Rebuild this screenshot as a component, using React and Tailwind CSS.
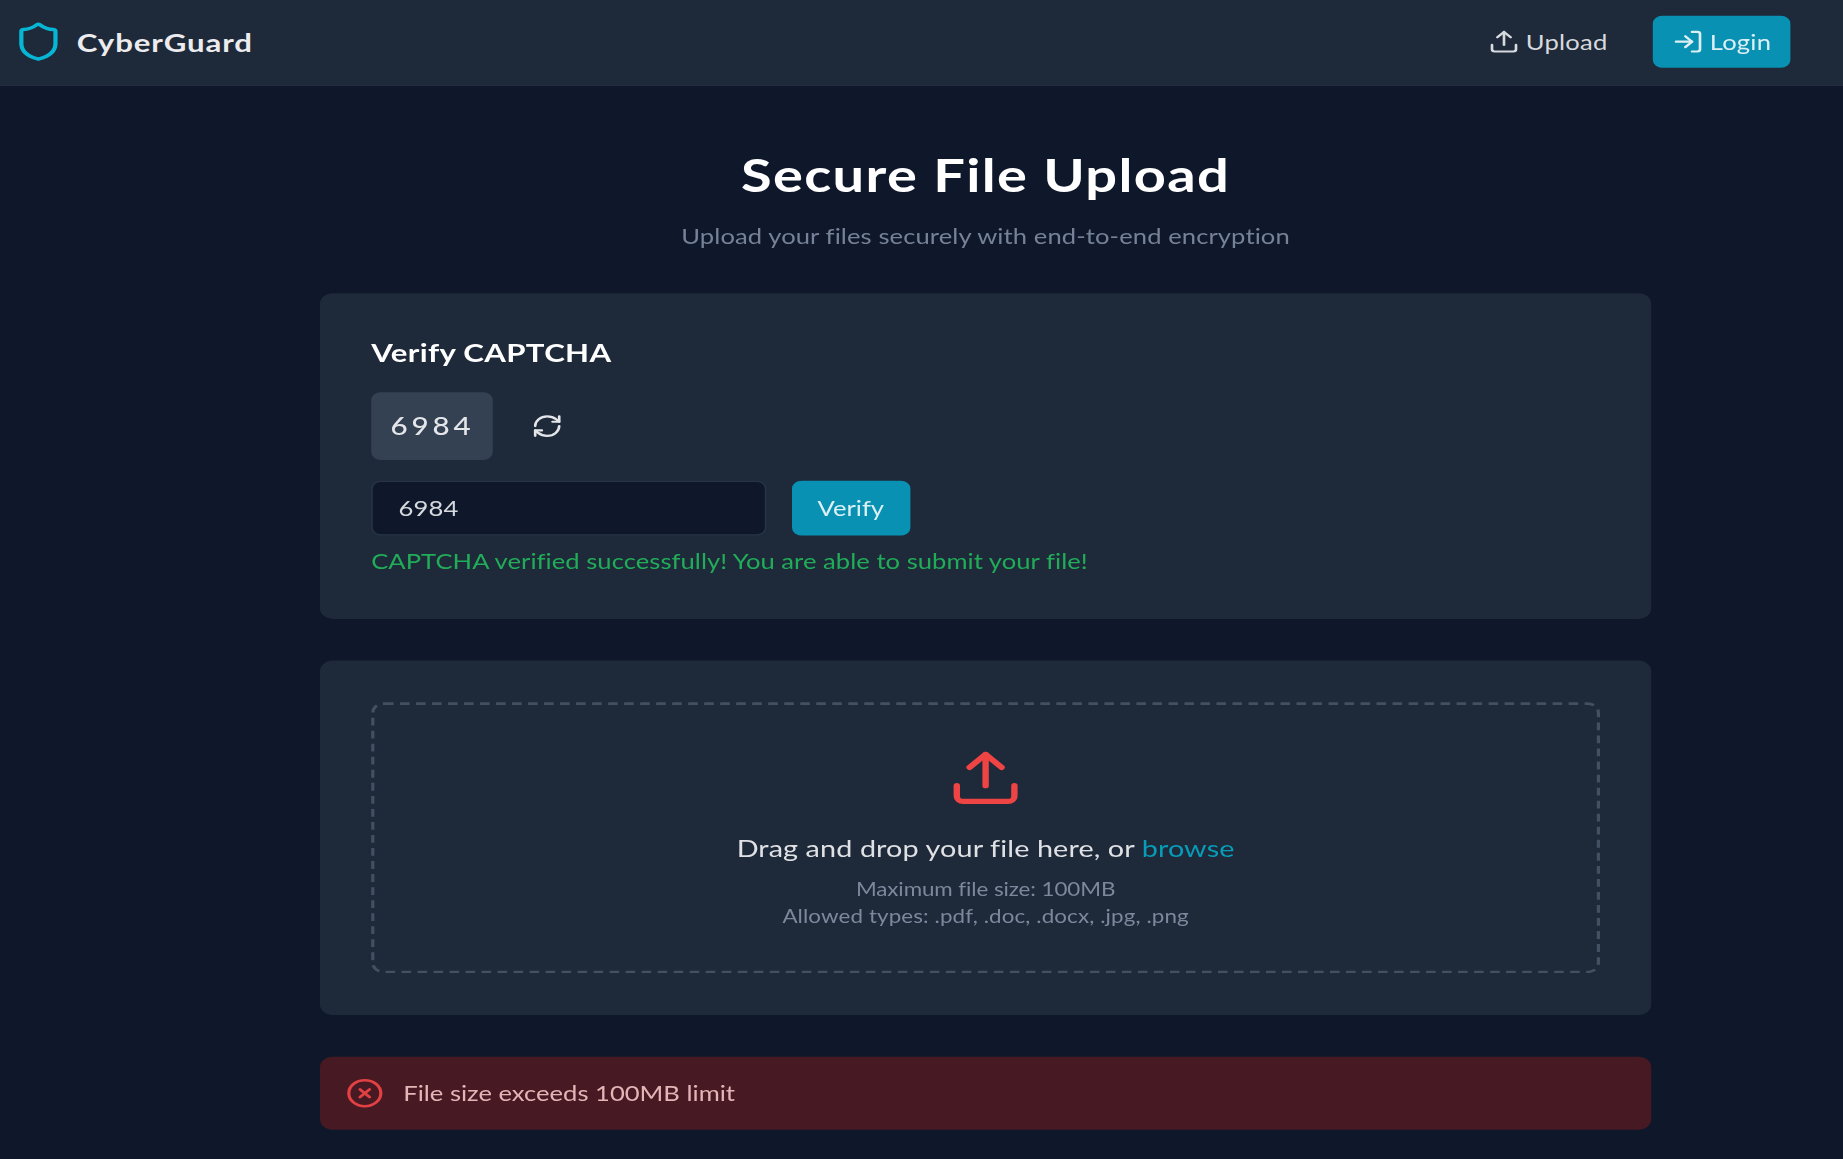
import { Shield, Upload, LogIn, RefreshCw, CircleX } from "lucide-react";

function Navbar() {
  return (
    <nav className="flex h-[66px] items-center justify-between border-b border-[#222d40] bg-[#1e293a] pr-[33px] pb-px pl-2">
      <div className="flex items-center gap-2">
        <Shield size={32} className="text-[#06b6d4]" />
        <span className="pt-px text-[19.5px] leading-7 font-bold tracking-[0.55px] text-[#ececee]">CyberGuard</span>
      </div>
      <div className="flex items-center gap-4">
        <a className="flex items-center gap-1 px-3 py-2 tracking-[0.12px] text-[#d6d9dd]">
          <Upload size={20} />
          <span>Upload</span>
        </a>
        <a className="flex items-center gap-1 rounded-md bg-[#0891b2] px-3 py-2 tracking-[0.12px] text-[#dceff4]">
          <LogIn size={20} />
          <span>Login</span>
        </a>
      </div>
    </nav>
  );
}

function CaptchaCard() {
  return (
    <section className="rounded-lg bg-[#1e293a] p-8">
      <h2 className="mb-4 text-[19.5px] leading-7 font-bold tracking-[0.2px] text-white">Verify CAPTCHA</h2>
      <div className="mb-4 flex items-center gap-4">
        <div className="w-[76px] rounded-md bg-[#334153] p-3 text-[18.5px] leading-7 font-medium tracking-[2.4px] text-[#e4e6e9]">
          6984
        </div>
        <button className="p-2 text-[#e4e6e9]">
          <RefreshCw size={20} />
        </button>
      </div>
      <div className="flex gap-4">
        <input
          readOnly
          value="6984"
          className="w-[247px] rounded-md border border-[#273447] bg-slate-900 px-4 py-2 tracking-[0.1px] text-[#d6d9dd] outline-none"
        />
        <button className="w-[73.5px] rounded-md bg-[#0891b2] text-[#dcf0f5]">Verify</button>
      </div>
      <p className="mt-2 tracking-[0.02px] text-[#21ad58]">
        CAPTCHA verified successfully! You are able to submit your file!
      </p>
    </section>
  );
}

function DropZone() {
  return (
    <section className="rounded-lg bg-[#1e293a] p-8">
      <div className="flex flex-col items-center rounded-lg border-2 border-dashed border-[#435062] p-8">
        <Upload size={48} className="mb-4 text-[#ef4444]" />
        <p className="mb-2 text-lg tracking-[0.06px] text-[#dfe1e4]">
          Drag and drop your file here, or <span className="text-[#079cb8]">browse</span>
        </p>
        <p className="text-sm tracking-[-0.06px] text-[#7c899c]">Maximum file size: 100MB</p>
        <p className="text-sm tracking-[0.06px] text-[#7c899c]">Allowed types: .pdf, .doc, .docx, .jpg, .png</p>
      </div>
    </section>
  );
}

function ErrorAlert() {
  return (
    <div className="flex items-center gap-3 rounded-lg bg-[#471a23] p-4 text-[#e3b5b7]">
      <CircleX size={24} className="text-[#e24042]" />
      <span>File size exceeds 100MB limit</span>
    </div>
  );
}

export default function App() {
  return (
    <div className="h-screen w-screen overflow-hidden bg-slate-900">
      <div className="w-[1152px] origin-top-left scale-x-[1.6] scale-y-[1.303] font-['Lato','Noto_Sans',sans-serif] text-base">
        <Navbar />
        <main className="ml-[200px] flex w-[832px] flex-col gap-8 pt-[46.8px]">
          <header className="text-center">
            <h1 className="mb-4 text-[35px] leading-10 font-bold tracking-[0.85px] text-white">
              Secure File Upload
            </h1>
            <p className="tracking-[0.05px] text-[#758297]">
              Upload your files securely with end-to-end encryption
            </p>
          </header>
          <CaptchaCard />
          <DropZone />
          <ErrorAlert />
        </main>
      </div>
    </div>
  );
}
